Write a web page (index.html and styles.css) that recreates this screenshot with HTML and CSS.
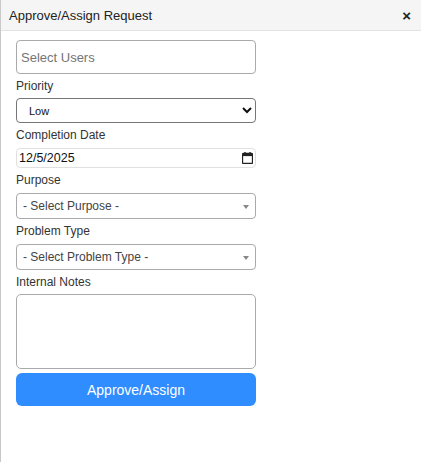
FILE: index.html
```html
<!DOCTYPE html>
<html>
<head>
<meta charset="utf-8">
<link rel="stylesheet" href="styles.css">
</head>
<body>
<div class="panel">
  <div class="header">
    <span class="title">Approve/Assign Request</span>
    <span class="close">×</span>
  </div>
  <form class="form">
    <input class="users" type="text" placeholder="Select Users">
    <label class="lbl tight">Priority</label>
    <select class="priority"><option>Low</option></select>
    <label class="lbl">Completion Date</label>
    <div class="date">
      <span class="date-text">12/5/2025</span>
      <svg class="cal" width="11" height="12" viewBox="0 0 11 12">
        <rect x="0.5" y="1.5" width="10" height="10" rx="1" fill="none" stroke="#222" stroke-width="1.3"/>
        <rect x="0.5" y="1.5" width="10" height="2.6" fill="#222"/>
        <rect x="2.3" y="0" width="1.4" height="2" fill="#222"/>
        <rect x="7.3" y="0" width="1.4" height="2" fill="#222"/>
      </svg>
    </div>
    <label class="lbl">Purpose</label>
    <div class="s2"><span class="s2-text">- Select Purpose -</span><span class="caret"></span></div>
    <label class="lbl">Problem Type</label>
    <div class="s2"><span class="s2-text">- Select Problem Type -</span><span class="caret"></span></div>
    <label class="lbl tight">Internal Notes</label>
    <textarea class="notes"></textarea>
    <button type="button" class="btn">Approve/Assign</button>
  </form>
</div>
</body>
</html>
```
FILE: styles.css
```css
html, body {
  margin: 0;
  padding: 0;
  background: #fff;
  font-family: "Liberation Sans", Arial, sans-serif;
}
.panel {
  width: 421px;
  height: 462px;
  border-left: 1px solid #c9c9c9;
  box-sizing: border-box;
}
.header {
  height: 30px;
  background: #f5f5f5;
  border-bottom: 1px solid #e3e3e3;
  display: flex;
  align-items: center;
  justify-content: space-between;
  padding: 0 10px 0 8px;
}
.title {
  font-size: 13px;
  color: #222;
}
.close {
  font-size: 15px;
  font-weight: bold;
  color: #222;
  line-height: 1;
}
.form {
  display: flex;
  flex-direction: column;
  width: 240px;
  padding: 9px 0 0 15px;
  margin: 0;
}
.users {
  height: 34px;
  box-sizing: border-box;
  border: 1px solid #aaa;
  border-radius: 4px;
  padding: 0 4px;
  font-family: inherit;
  font-size: 13px;
  margin: 0;
  outline: none;
}
.users::placeholder { color: #757575; }
.lbl {
  display: block;
  height: 14px;
  line-height: 14px;
  font-size: 12px;
  color: #333;
  margin: 5px 0 6px 0;
}
.lbl.tight {
  margin-bottom: 5px;
}
.priority {
  height: 25px;
  box-sizing: border-box;
  border: 1px solid #767676;
  border-radius: 4px;
  background: #fff;
  font-family: inherit;
  font-size: 11px;
  color: #111;
  padding: 0 8px;
  margin: 0;
}
.date {
  height: 20px;
  box-sizing: border-box;
  border: 1px solid #e0e0e0;
  border-radius: 4px;
  background: #fff;
  display: flex;
  align-items: center;
  justify-content: space-between;
  padding: 0 2px 0 2px;
}
.date-text {
  font-size: 12.5px;
  color: #111;
}
.cal {
  display: block;
}
.s2 {
  height: 26px;
  box-sizing: border-box;
  border: 1px solid #aaa;
  border-radius: 4px;
  display: flex;
  align-items: center;
  justify-content: space-between;
  padding: 0 6px 0 6px;
}
.s2-text {
  font-size: 12px;
  color: #444;
}
.caret {
  width: 0;
  height: 0;
  border-style: solid;
  border-width: 4px 3px 0 3px;
  border-color: #888 transparent transparent transparent;
  margin-top: 1px;
}
.notes {
  height: 75px;
  box-sizing: border-box;
  border: 1px solid #aaa;
  border-radius: 5px;
  resize: none;
  margin: 0;
  font-family: inherit;
}
.btn {
  margin-top: 4px;
  height: 33px;
  border: none;
  border-radius: 6px;
  background: #2f8dff;
  color: #fff;
  font-family: inherit;
  font-size: 14px;
  padding: 0;
}
```
